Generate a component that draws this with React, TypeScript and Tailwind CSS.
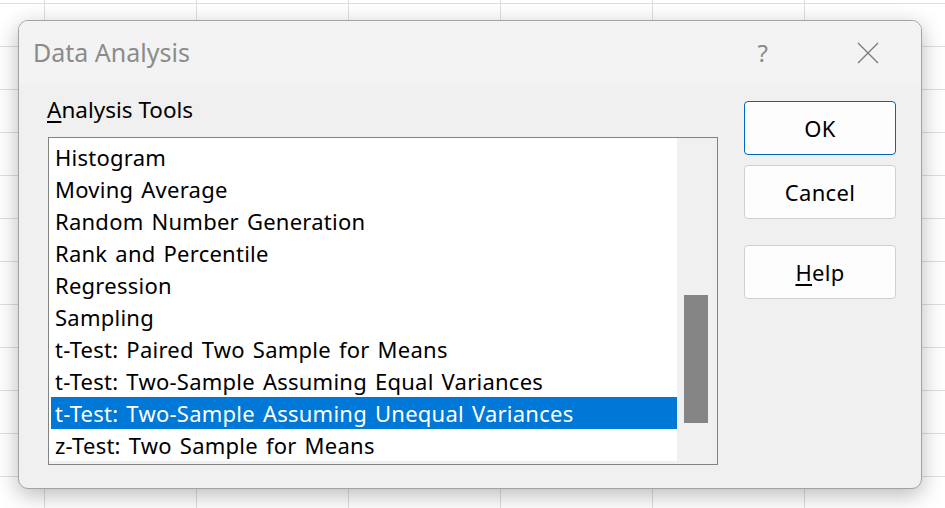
import React from 'react'

const tools = [
  'Histogram',
  'Moving Average',
  'Random Number Generation',
  'Rank and Percentile',
  'Regression',
  'Sampling',
  't-Test: Paired Two Sample for Means',
  't-Test: Two-Sample Assuming Equal Variances',
  't-Test: Two-Sample Assuming Unequal Variances',
  'z-Test: Two Sample for Means',
]

const selected = 8

const SheetGrid: React.FC = () => {
  const rows = Array.from({ length: 14 })
  const cols = Array.from({ length: 8 })
  return (
    <div className="absolute -left-[107px] -top-[39px] flex flex-col">
      {rows.map((_, r) => (
        <div key={r} className="flex">
          {cols.map((_, c) => (
            <div key={c} className="w-[152px] h-[43px] shrink-0 border-r border-b border-[#dedede]" />
          ))}
        </div>
      ))}
    </div>
  )
}

const DialogButton: React.FC<{ children: React.ReactNode; primary?: boolean; className?: string }> = ({
  children,
  primary,
  className,
}) => (
  <button
    className={`w-[152px] h-[54px] rounded-[4px] bg-[#fdfdfd] text-[22px] tracking-[0.3px] text-black border ${
      primary ? 'border-[#0067c0]' : 'border-[#d0d0d0]'
    } ${className ?? ''}`}
  >
    {children}
  </button>
)

const App: React.FC = () => {
  return (
    <div
      className="relative w-[945px] h-[508px] overflow-hidden bg-white"
      style={{ fontFamily: '"Noto Sans", "Open Sans", sans-serif' }}
    >
      <SheetGrid />

      {/* dialog */}
      <div className="absolute left-[18px] top-[20px] w-[904px] h-[469px] rounded-[10px] border border-[#a3a3a3] bg-[#f0f0f0] shadow-[0_6px_22px_rgba(0,0,0,0.28)] flex flex-col overflow-hidden">
        <div className="h-[64px] shrink-0 bg-[#f3f3f3] flex items-center pl-[14px] pr-[42px]">
          <span className="text-[25px] text-[#8b8b8b] flex-1">Data Analysis</span>
          <span className="text-[24px] text-[#8b8b8b] mr-[89px]">?</span>
          <svg width="22" height="22" viewBox="0 0 22 22" className="text-[#7a7a7a]">
            <path d="M1 1 L21 21 M21 1 L1 21" stroke="currentColor" strokeWidth="1.3" fill="none" />
          </svg>
        </div>

        <div className="flex pl-[29px] pt-[9px]">
          <div className="flex flex-col">
            <div className="h-[32px] leading-[32px] text-[22.5px] text-black -ml-[1px] mb-[11px]">
              <span className="underline underline-offset-[3px]">A</span>nalysis Tools
            </div>
            <div className="w-[670px] h-[328px] border border-[#838383] bg-[#f0f0f0] flex">
              <div className="w-[628px] h-[323px] bg-white pl-[2px] pt-[3px] flex flex-col">
                {tools.map((t, i) => (
                  <div
                    key={t}
                    className={`h-[32px] leading-[32px] pl-[4px] text-[22px] tracking-[0.25px] [word-spacing:2px] whitespace-nowrap ${
                      i === selected ? 'bg-[#0078d7] text-white' : 'text-black'
                    }`}
                  >
                    {t}
                  </div>
                ))}
              </div>
              <div className="flex-1 bg-[#f0f0f0] pl-[7px] pt-[157px]">
                <div className="w-[24px] h-[128px] bg-[#858585]" />
              </div>
            </div>
          </div>

          <div className="flex flex-col ml-[26px] pt-[7px]">
            <DialogButton primary>OK</DialogButton>
            <DialogButton className="mt-[10px]">Cancel</DialogButton>
            <DialogButton className="mt-[26px]">
              <span className="underline underline-offset-[3px]">H</span>elp
            </DialogButton>
          </div>
        </div>
      </div>
    </div>
  )
}

export default App
